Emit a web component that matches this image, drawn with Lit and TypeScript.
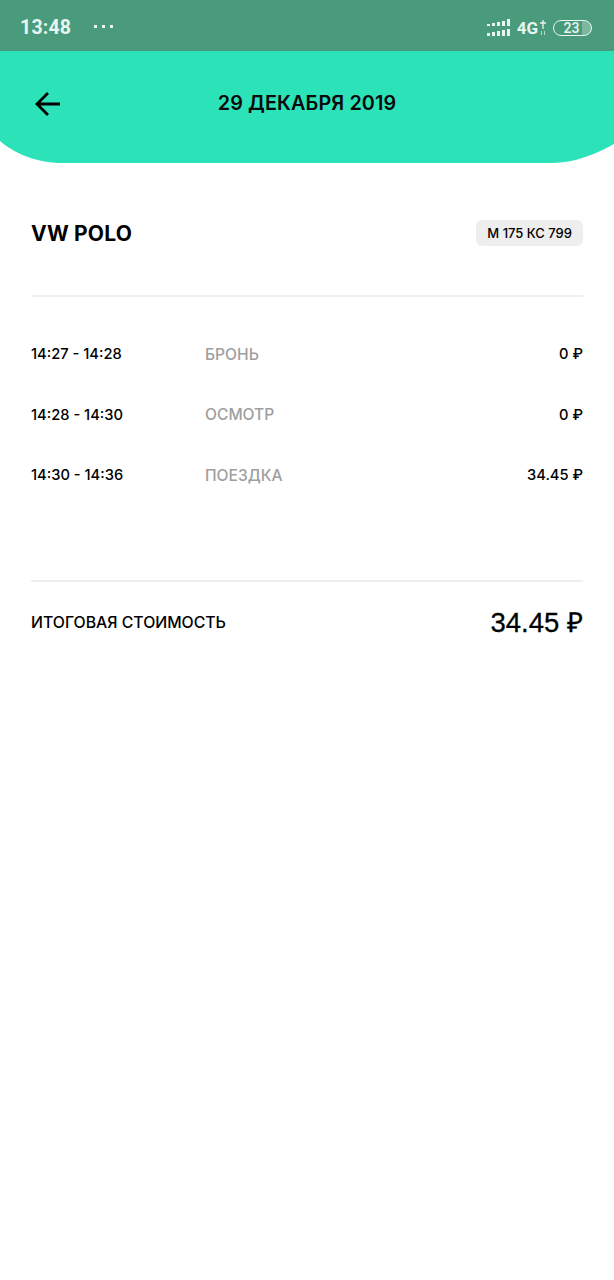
import { LitElement, html, css } from "lit";
import { customElement } from "lit/decorators.js";

const rows = [
  ["14:27 - 14:28", "БРОНЬ", "0 ₽"],
  ["14:28 - 14:30", "ОСМОТР", "0 ₽"],
  ["14:30 - 14:36", "ПОЕЗДКА", "34.45 ₽"],
];

@customElement("app-root")
export class AppRoot extends LitElement {
  static styles = css`
    :host { display: block; width: 614px; height: 1280px; background: #fff; font-family: Inter, "Noto Sans", sans-serif; color: #000; overflow: hidden; }
    .status { height: 51px; background: #4a9b7b; color: #e9f5f0; display: flex; align-items: center; padding: 0 22px 0 20px; box-sizing: border-box; font-family: Roboto, sans-serif; font-weight: 700; }
    .time { font-size: 19.5px; letter-spacing: 0.2px; width: 74px; padding-top: 4px; }
    .dots { display: flex; gap: 5px; margin-top: 2px; }
    .dots i { width: 3px; height: 3px; background: #e9f5f0; }
    .right { margin-left: auto; display: flex; align-items: center; padding-top: 4px; }
    .g4 { font-size: 17px; margin-left: 7px; margin-right: 1px; }
    .batt { width: 39px; height: 16px; box-sizing: border-box; border: 1.5px solid #e9f5f0; border-radius: 8px; margin-left: 6px; font-size: 14px; font-weight: 500; display: flex; align-items: center; justify-content: center; line-height: 1; padding-right: 2px; background: linear-gradient(to right, transparent 76%, rgba(255, 255, 255, 0.28) 76%); }
    .head { height: 112px; background: #2be2b9; clip-path: path("M0 0H614V93C596 103 574 112 552 112H62C36 112 14 102 0 90Z"); position: relative; display: flex; align-items: center; justify-content: center; }
    .back { position: absolute; left: 35px; top: 40px; display: block; }
    .title { font-size: 19.8px; font-weight: 600; letter-spacing: 0.1px; color: #0a0a0a; margin-bottom: 8px; }
    .content { padding: 0 31px; }
    .car { height: 134px; display: flex; align-items: center; justify-content: space-between; border-bottom: 2px solid #f0f0f0; box-sizing: border-box; padding-top: 8px; }
    .model { font-size: 21px; font-weight: 700; letter-spacing: 0.2px; }
    .plate { background: #eeeeee; border-radius: 6px; font-size: 13px; font-weight: 500; height: 26px; line-height: 26px; padding: 0 11px; }
    .rows { padding: 27px 0 74px; display: flex; flex-direction: column; border-bottom: 2px solid #eeeeee; }
    .row { display: grid; grid-template-columns: 174px 1fr auto; height: 60.5px; align-items: center; font-size: 14.7px; font-weight: 500; }
    .label { color: #9e9e9e; font-weight: 500; font-size: 15.6px; }
    .total { display: flex; justify-content: space-between; align-items: center; height: 82px; }
    .total .t { font-size: 15.8px; font-weight: 500; }
    .total .s { font-family: "Liberation Sans", Arial, sans-serif; font-size: 27.5px; font-weight: 400; -webkit-text-stroke: 0.3px #000; margin-bottom: 2px; }
  `;

  render() {
    return html`
      <div class="status">
        <span class="time">13:48</span>
        <span class="dots"><i></i><i></i><i></i></span>
        <span class="right">
          <svg width="23" height="17" viewBox="0 0 23 17" fill="#e9f5f0">
            <rect x="0" y="5" width="3" height="2"/><rect x="5" y="4" width="3" height="3"/><rect x="10" y="3" width="3" height="4"/><rect x="15" y="2" width="3" height="5"/><rect x="20" y="0" width="3" height="7"/>
            <rect x="0" y="14" width="3" height="3"/><rect x="5" y="13" width="3" height="4"/><rect x="10" y="12" width="3" height="5"/><rect x="15" y="11" width="3" height="6"/><rect x="20" y="10" width="3" height="7"/>
          </svg>
          <span class="g4">4G</span>
          <svg width="8" height="17" viewBox="0 0 8 17" fill="none" stroke="#e9f5f0" stroke-width="1.3">
            <path d="M4 1v9M1 4h6"/><path d="M2.5 12v4M5.5 12v4" stroke-width="1" opacity=".7"/>
          </svg>
          <span class="batt">23</span>
        </span>
      </div>
      <div class="head">
        <svg class="back" width="25" height="26" viewBox="0 0 25 26" fill="none" stroke="#000" stroke-width="2.8">
          <path d="M25 13H2M13 2 2 13l11 11"/>
        </svg>
        <span class="title">29 ДЕКАБРЯ 2019</span>
      </div>
      <div class="content">
        <div class="car">
          <span class="model">VW POLO</span>
          <span class="plate">М 175 КС 799</span>
        </div>
        <div class="rows">
          ${rows.map(
            (r) => html`<div class="row"><span>${r[0]}</span><span class="label">${r[1]}</span><span>${r[2]}</span></div>`
          )}
        </div>
        <div class="total">
          <span class="t">ИТОГОВАЯ СТОИМОСТЬ</span>
          <span class="s">34.45 ₽</span>
        </div>
      </div>
    `;
  }
}
